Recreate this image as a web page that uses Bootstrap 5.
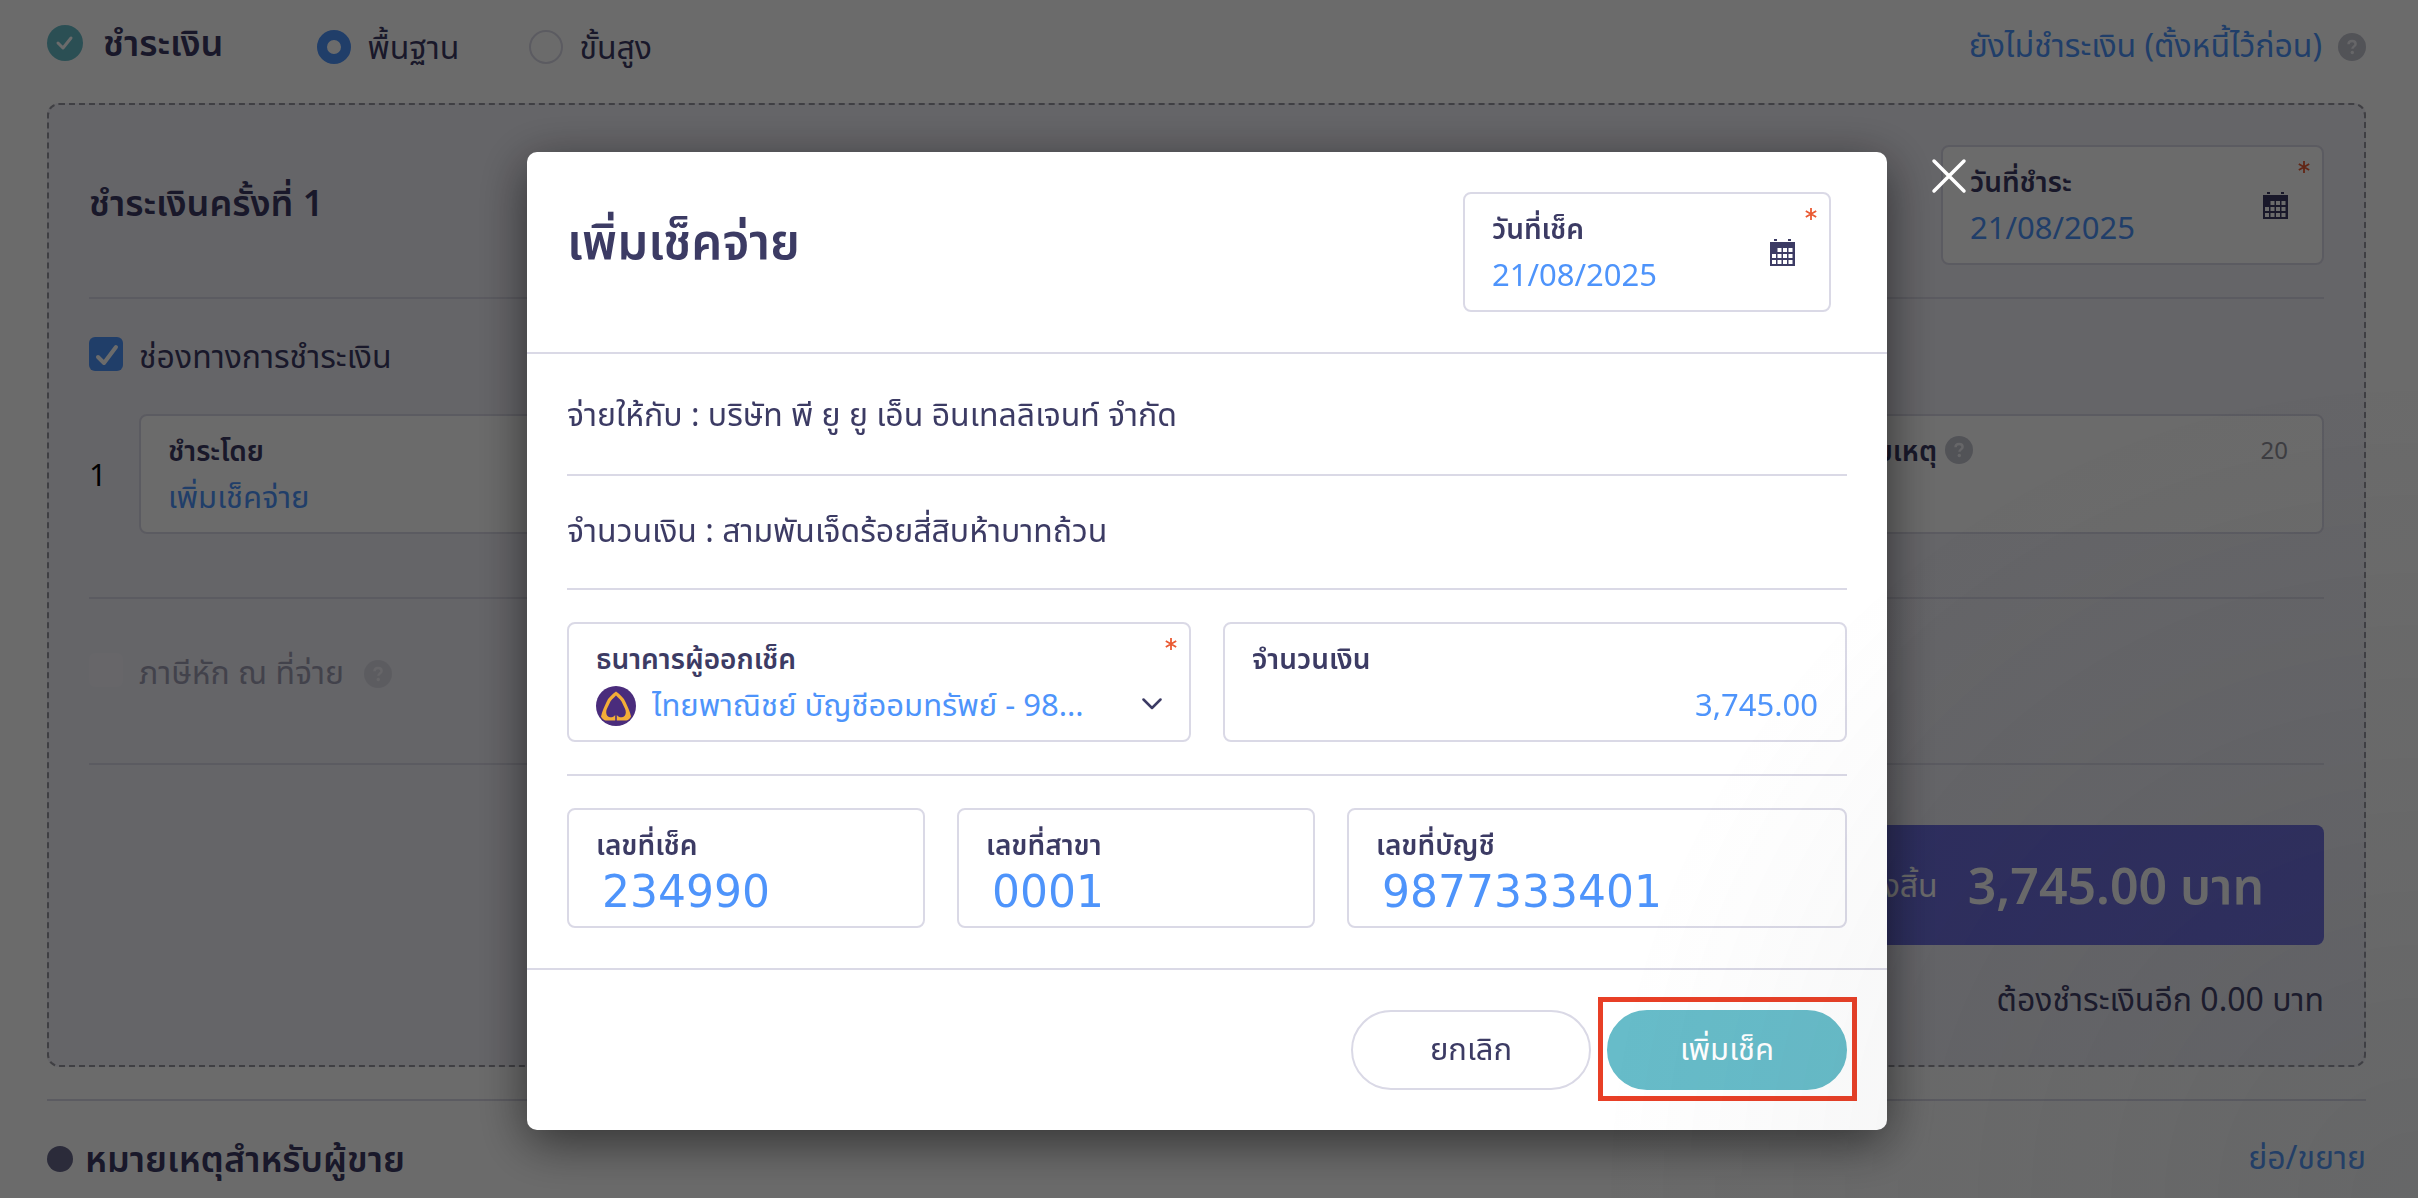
<!DOCTYPE html>
<html lang="th">
<head>
<meta charset="utf-8">
<meta name="viewport" content="width=device-width, initial-scale=1">
<title>เพิ่มเช็คจ่าย</title>
<link href="https://cdn.jsdelivr.net/npm/bootstrap@5.3.0/dist/css/bootstrap.min.css" rel="stylesheet">
<style>
:root { --ink:#3c3b64; --link:#4e94fb; --line:#dad9e6; --teal:#67bcc9; }
body { font-family:"Noto Sans","Noto Sans Thai","Liberation Sans",sans-serif; font-size:32px; line-height:48px; font-weight:400; color:var(--ink); background:#fff; overflow:hidden; }
a { color:var(--link); text-decoration:none; }
svg { display:block; flex:none; }
.page { padding:0 52px 16px 47px; }
.topbar { height:94px; margin-bottom:9px; }
.heading { font-size:36px; font-weight:600; margin:0; line-height:48px; }
.choice { gap:16px; }
.mode-basic { margin-left:94px; }
.mode-advanced { margin-left:70px; }
.form-check-input.round-pick, .form-check-input.square-pick { width:34px; height:34px; margin:0; border:2px solid var(--line); float:none; flex:none; box-shadow:none; }
.form-check-input.round-pick:checked { background:#fff; border:10px solid var(--link); }
.form-check-input.square-pick { border-radius:6px; }
.form-check-input.square-pick:checked { border:0; background-color:var(--link); background-size:34px 34px; background-image:url("data:image/svg+xml,%3Csvg xmlns='http://www.w3.org/2000/svg' viewBox='0 0 34 34'%3E%3Cpath d='M9 20l6 6 12-16' fill='none' stroke='%23fff' stroke-width='4' stroke-linecap='round' stroke-linejoin='round'/%3E%3C/svg%3E"); }
.panel { border:2px dashed #97969f; border-radius:12px; background:#f1f0f8; padding:0 40px 42px; }
.panel-head { padding:40px 0 32px; border-bottom:2px solid var(--line); }
.channel { padding:38px 0 63px; border-bottom:2px solid var(--line); }
.check-row { height:34px; }
.check-row label { padding-top:4px; }
.pay-row { margin-top:43px; }
.row-no { width:50px; color:#000; font-size:31px; }
.withhold { padding:54px 0 76px; border-bottom:2px solid var(--line); }
.faded { opacity:.45; }
.form-check-input.square-pick.blank { border-color:#fff; opacity:.3; }
.field-box { position:relative; background:#fff; border:2px solid var(--line); border-radius:8px; padding:13px 27px 11px; }
.field-box label { display:block; font-size:28px; line-height:42px; font-weight:600; }
.field-box input, .field-box select { display:block; width:100%; min-width:0; height:50px; border:0; padding:0; background:transparent; color:var(--link); font:inherit; font-size:31px; line-height:50px; appearance:none; outline:0; text-overflow:ellipsis; }
.date-field { width:368px; }
.date-field.wide { width:383px; }
.remark-field { flex:0 0 524px; }
.star { position:absolute; right:12px; top:14px; }
.cal { position:absolute; right:34px; top:44px; }
.counter { font-size:24px; line-height:42px; color:#92929c; padding-right:7px; }
.total { background:#6b6de0; color:#fff; border-radius:8px; height:120px; margin-top:60px; width:1100px; padding-right:60px; gap:30px; }
.total strong { font-size:50px; font-weight:600; }
.remain { margin-top:30px; }
.seller { margin-top:32px; border-top:2px solid var(--line); padding-top:32px; }
.dot { width:26px; height:26px; border-radius:50%; background:#66668a; }
.modal.cheque-layer { display:block; background:rgba(0,0,0,.58); padding-right:4px; }
.cheque-layer .modal-dialog { max-width:1360px; margin:152px auto 0; }
.cheque-layer .modal-content { border:0; border-radius:10px; color:var(--ink); box-shadow:0 12px 50px rgba(0,0,0,.55); }
.cheque-layer .modal-header { padding:40px 56px 40px 40px; border-bottom:2px solid var(--line); border-radius:0; }
.cheque-layer .modal-title { font-size:49px; line-height:60px; font-weight:600; padding-bottom:24px; }
.cheque-layer .modal-body { padding:0 40px 40px; }
.cheque-layer .modal-footer { padding:40px; border-top:2px solid var(--line); gap:16px; }
.cheque-layer .modal-footer > * { margin:0; }
.info { display:flex; align-items:center; height:122px; border-bottom:2px solid var(--line); }
.info.second { height:114px; padding-bottom:4px; }
.fields { display:flex; gap:32px; padding:32px 0; }
.fields + .fields { border-top:2px solid var(--line); padding-bottom:0; }
.fields .half { flex:1 1 0; min-width:0; }
.fields .narrow { flex:0 1 358px; min-width:0; }
.field-box input.micr { font-family:"DejaVu Sans",sans-serif; font-size:44px; padding:4px 0 0 6px; }
.bank { gap:16px; }
.bank select { flex:0 1 460px; }
.round-btn { width:240px; height:80px; border-radius:40px; font-size:31px; line-height:44px; padding:0 0 4px; color:var(--ink); border:2px solid var(--line); background:#fff; }
.round-btn.main { background:var(--teal); border-color:var(--teal); color:#fff; }
.callout { position:relative; }
.callout::after { content:""; position:absolute; inset:-13px -10px -11px -9px; border:5px solid #e83f26; pointer-events:none; }
.close-x { position:absolute; right:-80px; top:6px; padding:0; border:0; background:none; }
.corner-shade { position:fixed; inset:0; z-index:2000; pointer-events:none; background:radial-gradient(circle at 100% 100%, rgba(70,76,84,.12), rgba(70,76,84,.04) 560px, rgba(70,76,84,0) 820px); }
</style>
</head>
<body>
<svg width="0" height="0" class="position-absolute" aria-hidden="true">
  <symbol id="help" viewBox="0 0 28 28"><circle cx="14" cy="14" r="14" fill="#c3c5d0"/><path d="M10.5 11.3c0-2 1.500-3.300 3.600-3.300s3.500 1.200 3.500 2.900c0 2.400-3.200 2.500-3.200 4.900" fill="none" stroke="#f4f4f8" stroke-width="2.400"/><circle cx="14.300" cy="19.500" r="1.700" fill="#f4f4f8"/></symbol>
  <symbol id="calendar" viewBox="0 0 25 28"><path fill="#3c3b64" d="M4 1h3v2H4zM18 1h3v2h-3zM0 4h25v24H0z"/><path fill="#fff" d="M7.500 10h4v4h-4zM13 10h4v4h-4zM18.500 10h4v4h-4zM2 16h4v4H2zM7.500 16h4v4h-4zM13 16h4v4h-4zM18.500 16h4v4h-4zM2 22h4v4H2zM7.500 22h4v4h-4zM13 22h4v4h-4zM18.500 22h4v4h-4z"/></symbol>
  <symbol id="required" viewBox="0 0 12 12"><path d="M6 0v12M.8 3l10.400 6M.8 9l10.400-6" stroke="#ea5a33" stroke-width="1.800"/></symbol>
</svg>

<main class="page">
  <div class="topbar d-flex align-items-center">
    <div class="d-flex align-items-center pb-2">
      <svg width="36" height="36" viewBox="0 0 36 36"><circle cx="18" cy="18" r="18" fill="#67bcc9"/><path d="M11 18l5 5 8-10" fill="none" stroke="#fff" stroke-width="3" stroke-linecap="round" stroke-linejoin="round"/></svg>
      <h2 class="heading ms-3 ps-1">ชำระเงิน</h2>
    </div>
    <div class="choice mode-basic d-flex align-items-center">
      <input class="form-check-input round-pick" type="radio" name="mode" id="basic" checked><label for="basic">พื้นฐาน</label>
    </div>
    <div class="choice mode-advanced d-flex align-items-center">
      <input class="form-check-input round-pick" type="radio" name="mode" id="advanced"><label for="advanced">ขั้นสูง</label>
    </div>
    <a href="#" class="ms-auto me-3 pb-1">ยังไม่ชำระเงิน (ตั้งหนี้ไว้ก่อน)</a>
    <svg width="28" height="28"><use href="#help"/></svg>
  </div>

  <section class="panel">
    <div class="panel-head d-flex align-items-center justify-content-between">
      <h3 class="heading pb-1">ชำระเงินครั้งที่ 1</h3>
      <div class="field-box date-field wide">
        <label for="payDate">วันที่ชำระ</label>
        <input id="payDate" value="21/08/2025">
        <svg class="star" width="12" height="12"><use href="#required"/></svg>
        <svg class="cal" width="25" height="28"><use href="#calendar"/></svg>
      </div>
    </div>
    <div class="channel">
      <div class="check-row choice d-flex align-items-center">
        <input class="form-check-input square-pick" type="checkbox" id="channel" checked><label for="channel">ช่องทางการชำระเงิน</label>
      </div>
      <div class="pay-row d-flex align-items-center">
        <span class="row-no">1</span>
        <div class="field-box flex-grow-1 me-5">
          <label for="payBy">ชำระโดย</label>
          <select id="payBy"><option>เพิ่มเช็คจ่าย</option></select>
        </div>
        <div class="field-box remark-field">
          <div class="d-flex align-items-center">
            <label for="remark" class="me-2">หมายเหตุ</label>
            <svg width="28" height="28"><use href="#help"/></svg>
            <span class="counter ms-auto">20</span>
          </div>
          <input id="remark">
        </div>
      </div>
    </div>
    <div class="withhold">
      <div class="check-row choice d-flex align-items-center">
        <input class="form-check-input square-pick blank" type="checkbox" id="tax"><label for="tax" class="faded">ภาษีหัก ณ ที่จ่าย</label>
        <svg class="faded mt-2 ms-1" width="28" height="28"><use href="#help"/></svg>
      </div>
    </div>
    <div class="total d-flex align-items-center justify-content-end ms-auto"><span>จำนวนเงินชำระทั้งสิ้น</span><strong>3,745.00 บาท</strong></div>
    <div class="remain text-end">ต้องชำระเงินอีก 0.00 บาท</div>
  </section>

  <section class="seller d-flex align-items-center">
    <span class="dot"></span>
    <h2 class="heading ms-2 ps-1">หมายเหตุสำหรับผู้ขาย</h2>
    <a href="#" class="ms-auto pb-1">ย่อ/ขยาย</a>
  </section>
</main>

<div class="modal cheque-layer" role="dialog" aria-modal="true" aria-labelledby="chequeTitle">
  <div class="modal-dialog">
    <div class="modal-content">
      <div class="modal-header d-flex align-items-center justify-content-between">
        <h1 class="modal-title" id="chequeTitle">เพิ่มเช็คจ่าย</h1>
        <div class="field-box date-field">
          <label for="chequeDate">วันที่เช็ค</label>
          <input id="chequeDate" value="21/08/2025">
          <svg class="star" width="12" height="12"><use href="#required"/></svg>
          <svg class="cal" width="25" height="28"><use href="#calendar"/></svg>
        </div>
      </div>
      <div class="modal-body">
        <div class="info">จ่ายให้กับ : บริษัท พี ยู ยู เอ็น อินเทลลิเจนท์ จำกัด</div>
        <div class="info second">จำนวนเงิน : สามพันเจ็ดร้อยสี่สิบห้าบาทถ้วน</div>
        <div class="fields">
          <div class="field-box half">
            <label for="bank">ธนาคารผู้ออกเช็ค</label>
            <div class="bank d-flex align-items-center">
              <svg class="mt-1" width="40" height="40" viewBox="0 0 40 40"><circle cx="20" cy="20" r="20" fill="#4a2c7c"/><path fill="#f3ad37" fill-rule="evenodd" d="M20 5.500c4 3 8 6.500 9.500 10.500 2 4.500 4.500 9.500 5.500 14.500-1 2-2.500 3.500-4.500 4H9.500c-2-.5-3.500-2-4.500-4 1-5 3.500-10 5.500-14.500C12 12 16 8.500 20 5.500zM20 9.500c-2.500 2.500-5.500 5-6.500 8-1.500 3.500-3.500 6-3.300 9 .1 2.500 1.500 4.500 3.800 4.800 1.800.2 4-.3 5.200-2.300v5.500h1.600V29c1.200 2 3.400 2.500 5.200 2.300 2.300-.3 3.700-2.300 3.800-4.800.2-3-1.800-5.500-3.300-9-1-3-4-5.500-6.500-8z"/></svg>
              <select id="bank"><option>ไทยพาณิชย์ บัญชีออมทรัพย์ - 98...</option></select>
              <svg class="ms-auto" width="20" height="12" viewBox="0 0 20 12"><path d="M1.500 1.500L10 10l8.500-8.500" fill="none" stroke="#3c3b64" stroke-width="2.500" stroke-linecap="round" stroke-linejoin="round"/></svg>
            </div>
            <svg class="star" width="12" height="12"><use href="#required"/></svg>
          </div>
          <div class="field-box half">
            <label for="amount">จำนวนเงิน</label>
            <input id="amount" class="text-end" value="3,745.00">
          </div>
        </div>
        <div class="fields">
          <div class="field-box narrow"><label for="chequeNo">เลขที่เช็ค</label><input id="chequeNo" class="micr" value="234990"></div>
          <div class="field-box narrow"><label for="branchNo">เลขที่สาขา</label><input id="branchNo" class="micr" value="0001"></div>
          <div class="field-box half"><label for="accountNo">เลขที่บัญชี</label><input id="accountNo" class="micr" value="9877333401"></div>
        </div>
      </div>
      <div class="modal-footer">
        <button type="button" class="btn round-btn">ยกเลิก</button>
        <div class="callout d-flex"><button type="button" class="btn round-btn main">เพิ่มเช็ค</button></div>
      </div>
      <button type="button" class="close-x" aria-label="ปิด"><svg width="36" height="36" viewBox="0 0 36 36"><path d="M3 3l30 30M33 3L3 33" stroke="#fff" stroke-width="3.500" stroke-linecap="round"/></svg></button>
    </div>
  </div>
</div>
<div class="corner-shade"></div>
<script src="https://cdn.jsdelivr.net/npm/bootstrap@5.3.0/dist/js/bootstrap.bundle.min.js"></script>
</body>
</html>
